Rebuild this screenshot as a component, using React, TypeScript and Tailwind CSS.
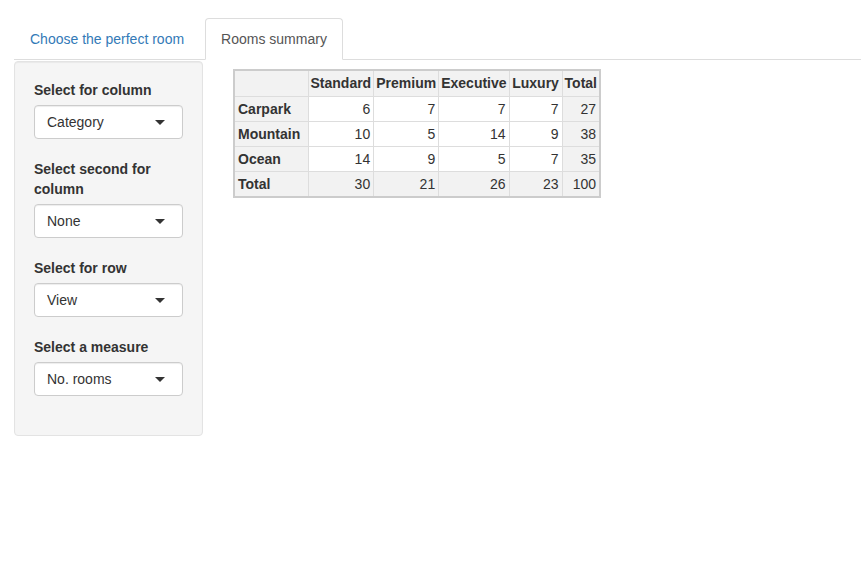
import React from 'react';

const cols: [string, string][] = [
  ['Standard', 'w-[65px]'],
  ['Premium', 'w-[65px]'],
  ['Executive', 'w-[69px]'],
  ['Luxury', 'w-[53px]'],
  ['Total', 'w-[38px]'],
];
const rows: [string, number[]][] = [
  ['Carpark', [6, 7, 7, 7, 27]],
  ['Mountain', [10, 5, 14, 9, 38]],
  ['Ocean', [14, 9, 5, 7, 35]],
  ['Total', [30, 21, 26, 23, 100]],
];

function SelectBox({ value }: { value: string }) {
  return (
    <div className="flex items-center justify-between h-[34px] w-[149px] pl-[12px] pr-[17px] bg-white border border-[#ccc] rounded-[4px] shadow-[inset_0_1px_1px_rgba(0,0,0,0.075)]">
      <span>{value}</span>
      <span className="w-0 h-0 border-l-[5px] border-r-[5px] border-t-[5px] border-l-transparent border-r-transparent border-t-[#333]" />
    </div>
  );
}

function Field({ label, value }: { label: string; value: string }) {
  return (
    <div className="mb-[20px] last:mb-0">
      <label className="block font-bold mb-[5px]">{label}</label>
      <SelectBox value={value} />
    </div>
  );
}

export default function App() {
  return (
    <div className="min-h-screen bg-white text-[#333] text-[14px] leading-[20px] font-['Liberation_Sans',Arial,sans-serif]">
      <div className="pt-[18px] pl-[14px]">
        <ul className="flex border-b border-[#ddd]">
          <li className="mr-[5px] -mb-px">
            <a className="block pl-[15px] pr-[15px] py-[10px] border border-transparent rounded-t-[4px] text-[#337ab7]">
              Choose the perfect room
            </a>
          </li>
          <li className="-mb-px">
            <a className="block px-[15px] py-[10px] border border-[#ddd] border-b-white rounded-t-[4px] bg-white text-[#555]">
              Rooms summary
            </a>
          </li>
        </ul>
      </div>
      <div className="flex pl-[14px] pt-px">
        <div className="w-[189px] h-[375px] bg-[#f5f5f5] border border-[#e3e3e3] rounded-[4px] shadow-[inset_0_1px_1px_rgba(0,0,0,0.05)] px-[19px] pt-[18px]">
          <Field label="Select for column" value="Category" />
          <div className="mb-[20px]">
            <label className="block font-bold mb-[5px] w-[130px]">Select second for column</label>
            <SelectBox value="None" />
          </div>
          <Field label="Select for row" value="View" />
          <Field label="Select a measure" value="No. rooms" />
        </div>
        <div className="pl-[30px] pt-[8px]">
          <table className="border-collapse border-2 border-[#ccc]">
            <thead>
              <tr>
                <th className="w-[74px] h-[26px] bg-[#f2f2f2] border border-[#ddd] px-[2px] py-[2px]" />
                {cols.map(([c, w]) => (
                  <th key={c} className={'bg-[#f2f2f2] border border-[#ddd] px-[2px] py-[2px] font-bold text-center ' + w}>
                    {c}
                  </th>
                ))}
              </tr>
            </thead>
            <tbody>
              {rows.map(([name, vals]) => {
                const isTotal = name === 'Total';
                return (
                  <tr key={name}>
                    <th className="bg-[#f2f2f2] border border-[#ddd] px-[3px] py-[2px] font-bold text-left">
                      {name}
                    </th>
                    {vals.map((v, i) => (
                      <td
                        key={i}
                        className={
                          'border border-[#ddd] px-[3px] py-[2px] text-right ' +
                          (isTotal || i === 4 ? 'bg-[#f2f2f2]' : 'bg-white')
                        }
                      >
                        {v}
                      </td>
                    ))}
                  </tr>
                );
              })}
            </tbody>
          </table>
        </div>
      </div>
    </div>
  );
}
